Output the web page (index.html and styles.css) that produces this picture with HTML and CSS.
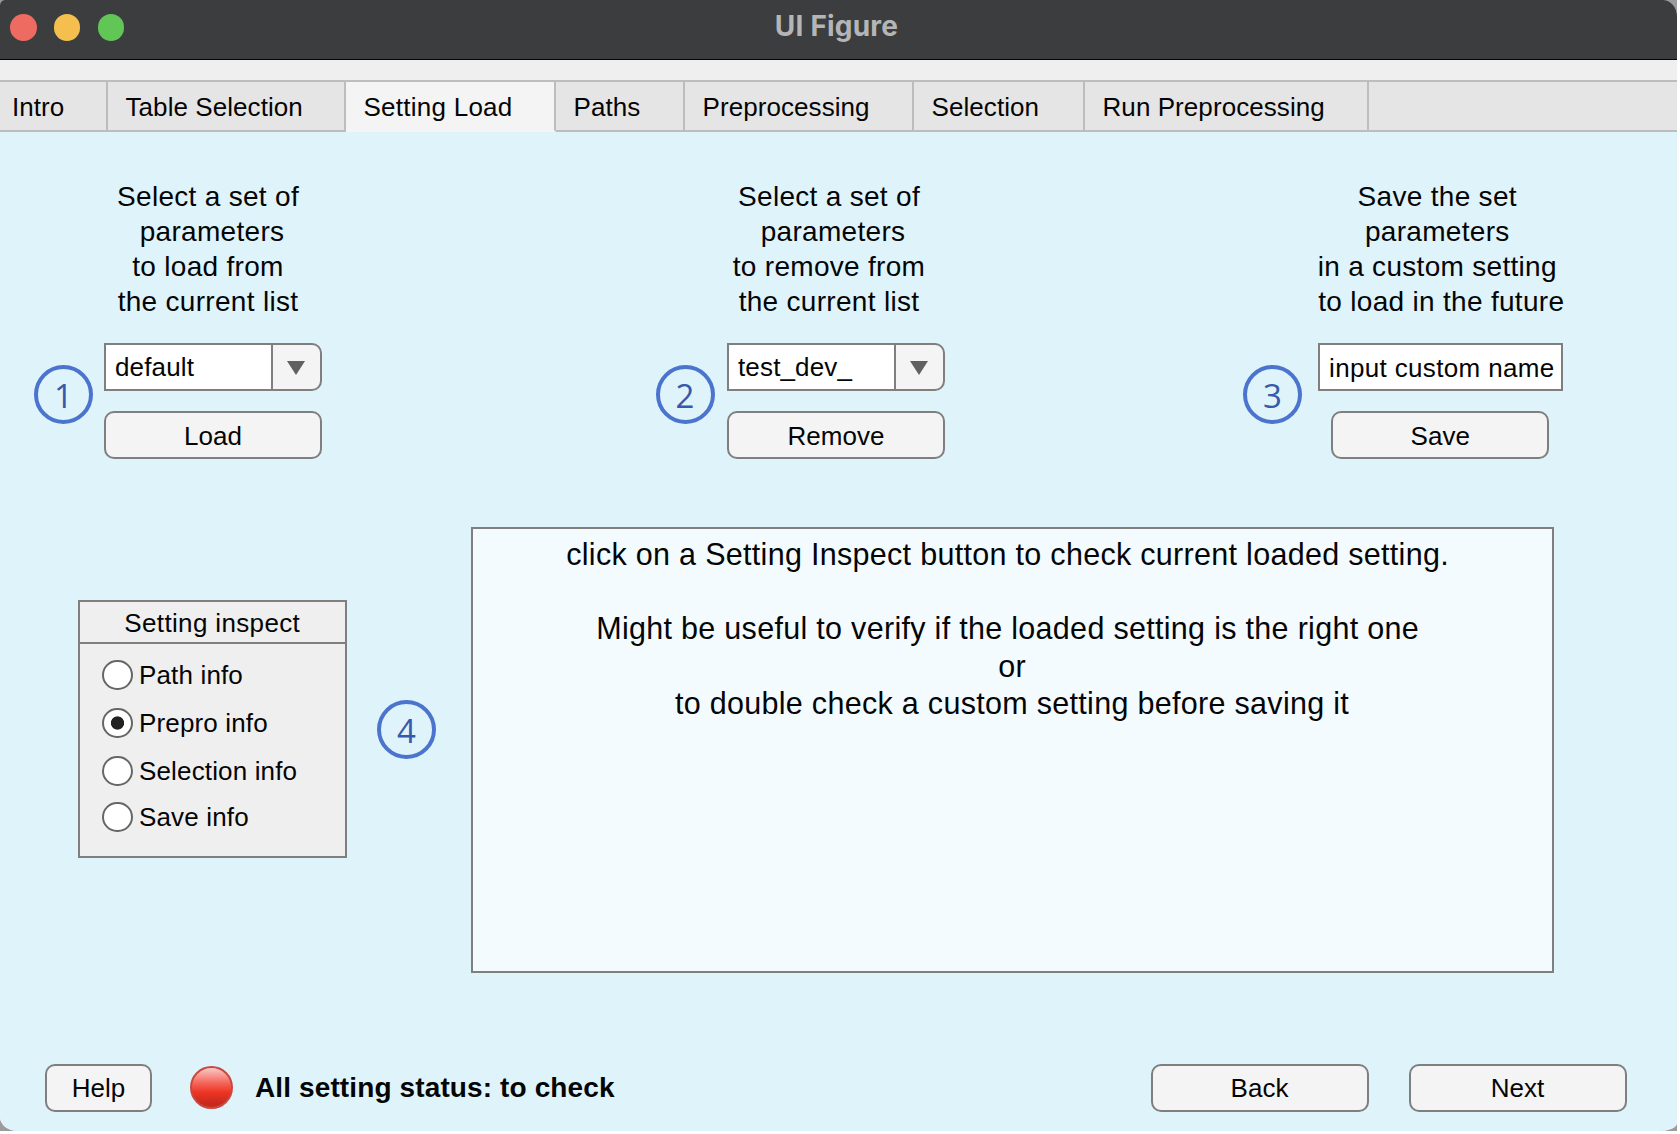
FILE: index.html
```html
<!DOCTYPE html>
<html lang="en">
<head>
<meta charset="utf-8">
<title>UI Figure</title>
<link rel="stylesheet" href="styles.css">
</head>
<body>
<div class="desktop">
<div class="window">
  <header class="titlebar">
    <div class="lights"><i class="light red"></i><i class="light yellow"></i><i class="light green"></i></div>
    <span class="title">UI Figure</span>
  </header>
  <nav class="tabs">
    <span class="tab tab-intro">Intro</span>
    <span class="tab tab-table">Table Selection</span>
    <span class="tab tab-load active">Setting Load</span>
    <span class="tab tab-paths">Paths</span>
    <span class="tab tab-pre">Preprocessing</span>
    <span class="tab tab-sel">Selection</span>
    <span class="tab tab-run">Run Preprocessing</span>
    <span class="tab-rest"></span>
  </nav>
  <main class="page">
    <section class="groups">
      <div class="group">
        <div class="caption"><div>Select a set of</div><div> parameters</div><div>to load from</div><div>the current list</div></div>
        <div class="badge">1</div>
        <div class="controls">
          <div class="dropdown"><span class="value">default</span><span class="arrow"><svg width="18" height="14" viewBox="0 0 18 14"><path d="M0 0H18L9 14Z" fill="#616161"/></svg></span></div>
          <div class="button wide">Load</div>
        </div>
      </div>
      <div class="group group-remove">
        <div class="caption"><div>Select a set of</div><div> parameters</div><div>to remove from</div><div>the current list</div></div>
        <div class="badge">2</div>
        <div class="controls">
          <div class="dropdown"><span class="value">test_dev_</span><span class="arrow"><svg width="18" height="14" viewBox="0 0 18 14"><path d="M0 0H18L9 14Z" fill="#616161"/></svg></span></div>
          <div class="button wide">Remove</div>
        </div>
      </div>
      <div class="group group-save">
        <div class="caption"><div>Save the set</div><div>parameters</div><div>in a custom setting</div><div> to load in the future</div></div>
        <div class="badge">3</div>
        <div class="controls">
          <div class="field"><span>input custom name</span></div>
          <div class="button wide">Save</div>
        </div>
      </div>
    </section>
    <section class="inspect">
      <div class="radio-panel">
        <div class="radio-title">Setting inspect</div>
        <div class="radio-list">
          <div class="radio"><i class="dot"></i>Path info</div>
          <div class="radio"><i class="dot on"></i>Prepro info</div>
          <div class="radio"><i class="dot"></i>Selection info</div>
          <div class="radio"><i class="dot"></i>Save info</div>
        </div>
      </div>
      <div class="badge">4</div>
      <div class="textarea"><div>click on a Setting Inspect button to check current loaded setting. </div><div> </div><div>Might be useful to verify if the loaded setting is the right one </div><div>or</div><div>to double check a custom setting before saving it</div></div>
    </section>
    <footer class="footer">
      <div class="button help">Help</div>
      <div class="lamp"></div>
      <div class="status">All setting status: to check</div>
      <div class="button wide back">Back</div>
      <div class="button wide next">Next</div>
    </footer>
  </main>
</div>
</div>
</body>
</html>
```
FILE: styles.css
```css
* { box-sizing: border-box; }
body { margin: 0; background: #fff; font-family: "Liberation Sans", Arial, sans-serif; font-size: 26px; line-height: 30px; color: #050505; overflow: hidden; }
.desktop { width: 1677px; height: 1131px; background: #9b9b9b; overflow: hidden; }
.window { width: 1677px; height: 1131px; display: flex; flex-direction: column; background: #efefef; border-radius: 5px 14px 18px 18px / 5px 16px 8px 14px; overflow: hidden; }

.titlebar { height: 60px; flex: none; display: grid; grid-template-columns: 1fr auto 1fr; background: #3c3d3f; border-bottom: 1.5px solid #050505; }
.lights { display: flex; gap: 17.2px; padding: 14px 0 0 10px; }
.light { width: 26.6px; height: 26.6px; border-radius: 50%; }
.red { background: #ed6b60; }
.yellow { background: #f5bf50; }
.green { background: #62c656; }
.title { font: 700 28px/34px Inter, sans-serif; letter-spacing: .2px; color: #b5b5b6; padding: 9px 4px 0 0; }

.tabs { flex: none; height: 52px; margin-top: 20px; display: flex; border-top: 2px solid #bdbdbd; background: #e5e5e5; }
.tab { border-right: 2px solid #bdbdbd; border-bottom: 2px solid #bdbdbd; padding: 10px 0 0 17.5px; white-space: nowrap; letter-spacing: .07px; }
.tab-intro { width: 108px; padding-left: 12px; }
.tab-table { width: 238px; }
.tab-load { width: 210px; letter-spacing: .25px; }
.tab-paths { width: 129px; }
.tab-pre { width: 229px; }
.tab-sel { width: 171px; }
.tab-run { width: 284px; }
.tab-rest { flex: 1; border-bottom: 2px solid #bdbdbd; }
.active { background: #f4f4f4; border-bottom-color: #f4f4f4; }

.page { flex: 1; display: flex; flex-direction: column; background: #dff3fb; }
.groups { display: flex; padding: 48px 0 0 34px; }
.group { display: grid; grid-template-columns: 58px 218px; column-gap: 12px; }
.group-remove { margin-left: 333.5px; column-gap: 13.5px; }
.group-save { margin-left: 298px; grid-template-columns: 58px 244.5px; column-gap: 17px; }
.caption { grid-column: 2; height: 131px; margin: -1px 5px 1px -5px; text-align: center; white-space: pre; font-size: 28px; line-height: 35px; letter-spacing: .3px; }
.group-remove .caption { margin-left: -9px; }
.group-save .caption { margin: -1px -4px 1px -10px; }
.badge { width: 59px; height: 59px; border: 4px solid #4b74ce; border-radius: 50%; color: #3559ab; font: 33px/53px "Open Sans", sans-serif; text-align: center; }
.group .badge { margin-top: 53.5px; }
.controls { display: flex; flex-direction: column; align-items: center; gap: 20px; padding-top: 32px; }
.dropdown { width: 218px; height: 48px; display: flex; border: 2px solid #7f7f7f; border-radius: 0 10px 10px 0; background: #f4f4f4; }
.value { width: 167px; background: #fff; border-right: 2px solid #7f7f7f; padding: 7px 0 0 9px; letter-spacing: .15px; }
.arrow { flex: 1; display: flex; justify-content: center; padding: 16px 1px 0 0; }
.button { height: 48px; border: 2px solid #7f7f7f; border-radius: 10px; background: #f4f4f4; text-align: center; line-height: 46px; }
.wide { width: 218px; }
.field { width: 100%; height: 48px; border: 2px solid #7f7f7f; background: #fff; padding: 8px 8px 0 9px; }
.field span { display: block; white-space: nowrap; letter-spacing: .35px; }

.inspect { display: flex; margin: 68px 0 0 78px; }
.radio-panel { width: 268.5px; height: 258px; margin-top: 73px; border: 2px solid #7f7f7f; background: #efefef; }
.radio-title { height: 42px; border-bottom: 2px solid #7f7f7f; text-align: center; padding-top: 6px; letter-spacing: .35px; }
.radio-list { display: flex; flex-direction: column; gap: 17px; padding: 15.5px 0 0 22px; }
.radio { display: flex; align-items: center; gap: 6.5px; height: 31px; letter-spacing: .15px; }
.radio:last-child { margin-top: -2px; }
.dot { width: 30.5px; height: 30.5px; border: 2px solid #666; border-radius: 50%; background: #fff; }
.on { background: radial-gradient(circle, #222 6.2px, #fff 7px); }
.inspect .badge { margin: 173px 0 0 30.5px; }
.textarea { width: 1083px; height: 446px; margin-left: 34.5px; border: 2px solid #7f7f7f; background: #f3fbff; padding-top: 7px; text-align: center; white-space: pre; font-size: 30.5px; line-height: 37.2px; letter-spacing: .3px; }

.footer { display: flex; align-items: flex-start; margin: 91px 0 0 45px; }
.footer .button { line-height: 44px; }
.help { width: 107px; }
.lamp { width: 43px; height: 43px; margin: 2px 0 0 38px; border-radius: 50%; border: 2px solid #c9493f; background: linear-gradient(#fbc9c5 0%, #f4665c 38%, #ee3524 62%, #c82a1d 90%); }
.status { width: 895.5px; margin-left: 22px; font-size: 28px; font-weight: bold; line-height: 48px; letter-spacing: .12px; }
.next { margin-left: 40px; }
```
